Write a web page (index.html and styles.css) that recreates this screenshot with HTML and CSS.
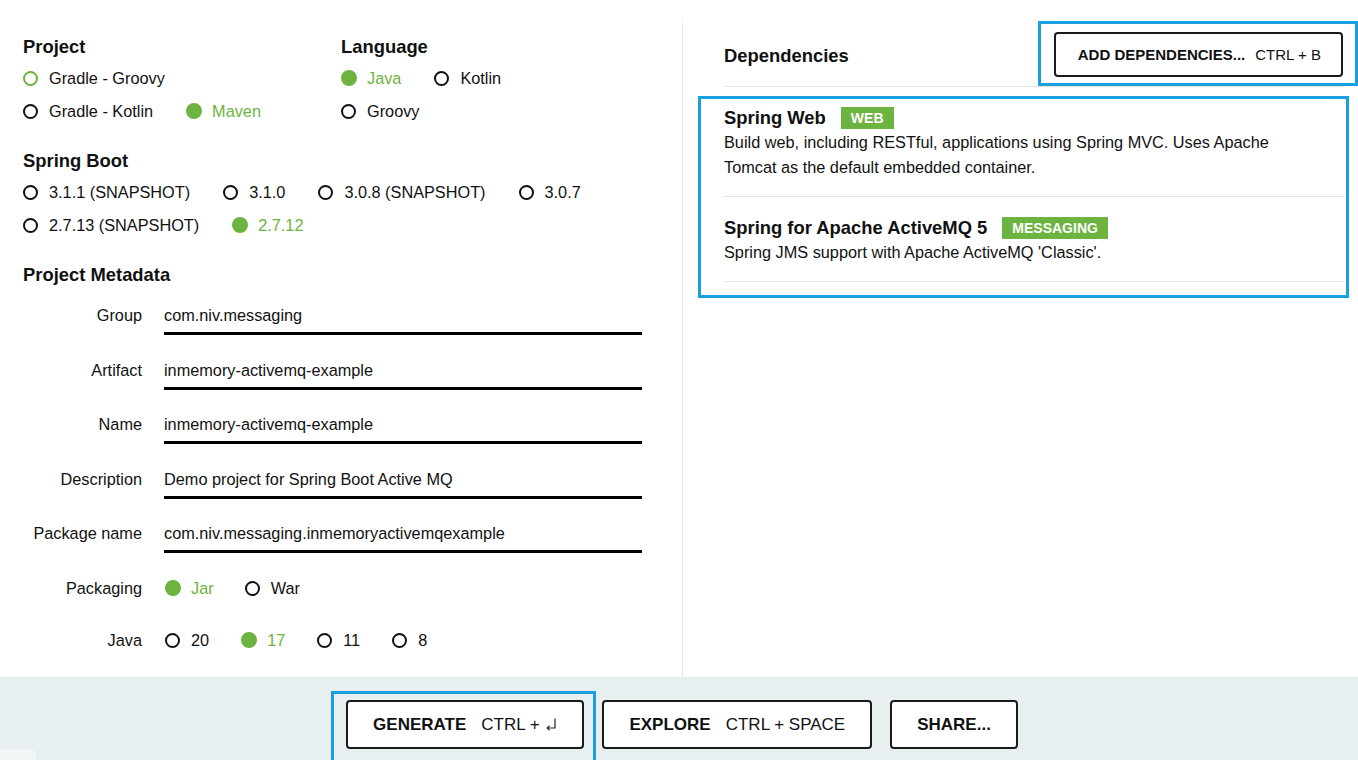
FILE: index.html
```html
<!DOCTYPE html>
<html lang="en">
<head>
<meta charset="utf-8">
<title>Spring Initializr</title>
<link rel="stylesheet" href="styles.css">
</head>
<body>
<div class="app">
  <main class="main">
    <section class="left">
      <div class="top-row">
        <div class="group project">
          <h2 class="heading">Project</h2>
          <div class="radio-row">
            <label class="radio focus"><span class="dot"></span>Gradle - Groovy</label>
          </div>
          <div class="radio-row">
            <label class="radio"><span class="dot"></span>Gradle - Kotlin</label>
            <label class="radio checked"><span class="dot"></span>Maven</label>
          </div>
        </div>
        <div class="group language">
          <h2 class="heading">Language</h2>
          <div class="radio-row">
            <label class="radio checked"><span class="dot"></span>Java</label>
            <label class="radio"><span class="dot"></span>Kotlin</label>
          </div>
          <div class="radio-row">
            <label class="radio"><span class="dot"></span>Groovy</label>
          </div>
        </div>
      </div>

      <div class="group section">
        <h2 class="heading">Spring Boot</h2>
        <div class="radio-row">
          <label class="radio"><span class="dot"></span>3.1.1 (SNAPSHOT)</label>
          <label class="radio"><span class="dot"></span>3.1.0</label>
          <label class="radio"><span class="dot"></span>3.0.8 (SNAPSHOT)</label>
          <label class="radio"><span class="dot"></span>3.0.7</label>
        </div>
        <div class="radio-row">
          <label class="radio"><span class="dot"></span>2.7.13 (SNAPSHOT)</label>
          <label class="radio checked"><span class="dot"></span>2.7.12</label>
        </div>
      </div>

      <div class="group section meta">
        <h2 class="heading">Project Metadata</h2>
        <div class="fields">
          <div class="field"><span class="label">Group</span><span class="input">com.niv.messaging</span></div>
          <div class="field"><span class="label">Artifact</span><span class="input">inmemory-activemq-example</span></div>
          <div class="field"><span class="label">Name</span><span class="input">inmemory-activemq-example</span></div>
          <div class="field"><span class="label">Description</span><span class="input">Demo project for Spring Boot Active MQ</span></div>
          <div class="field"><span class="label">Package name</span><span class="input">com.niv.messaging.inmemoryactivemqexample</span></div>
          <div class="field radio-field">
            <span class="label">Packaging</span>
            <div class="radio-row inline">
              <label class="radio checked"><span class="dot"></span>Jar</label>
              <label class="radio"><span class="dot"></span>War</label>
            </div>
          </div>
          <div class="field radio-field">
            <span class="label">Java</span>
            <div class="radio-row inline java">
              <label class="radio"><span class="dot"></span>20</label>
              <label class="radio checked"><span class="dot"></span>17</label>
              <label class="radio"><span class="dot"></span>11</label>
              <label class="radio"><span class="dot"></span>8</label>
            </div>
          </div>
        </div>
      </div>
    </section>

    <section class="right">
      <div class="deps-head">
        <h2 class="heading">Dependencies</h2>
        <div class="hl add-wrap">
          <button class="btn add-btn"><b>ADD DEPENDENCIES...</b><span class="key">CTRL + B</span></button>
          <div class="hl-box add-box"></div>
        </div>
      </div>
      <div class="deps-list">
        <div class="dep">
          <div class="dep-title">Spring Web <span class="badge">WEB</span></div>
          <p class="dep-desc">Build web, including RESTful, applications using Spring MVC. Uses Apache Tomcat as the default embedded container.</p>
        </div>
        <div class="dep">
          <div class="dep-title">Spring for Apache ActiveMQ 5 <span class="badge">MESSAGING</span></div>
          <p class="dep-desc">Spring JMS support with Apache ActiveMQ 'Classic'.</p>
        </div>
        <div class="hl-box list-box"></div>
      </div>
    </section>
  </main>

  <footer class="footer">
    <div class="hl gen-wrap">
      <button class="btn foot-btn"><b>GENERATE</b><span class="key">CTRL + <svg class="ret" width="12" height="16" viewBox="0 0 12 16"><path d="M10 1.5 V11 H2.2" fill="none" stroke="#222" stroke-width="1.2"/><path d="M4.6 8.6 L2.2 11 L4.6 13.4" fill="none" stroke="#222" stroke-width="1.2"/></svg></span></button>
      <div class="hl-box gen-box"></div>
    </div>
    <button class="btn foot-btn"><b>EXPLORE</b><span class="key">CTRL + SPACE</span></button>
    <button class="btn foot-btn"><b>SHARE...</b></button>
    <div class="corner"></div>
  </footer>
</div>
</body>
</html>
```

FILE: styles.css
```css
* { box-sizing: border-box; }

html, body {
  margin: 0;
  padding: 0;
  background: #ffffff;
}

body {
  font-family: "Liberation Sans", Arial, sans-serif;
  font-size: 16.3px;
  color: #111;
  overflow: hidden;
}

.app {
  width: 1358px;
  height: 760px;
  display: flex;
  flex-direction: column;
}

.main {
  height: 677px;
  padding-top: 22px;
  display: flex;
}

.left {
  width: 683px;
  height: 655px;
  border-right: 1px solid #e4e8e9;
  padding-left: 23px;
}

.right {
  flex: 1;
  padding: 0 13px 0 41px;
}

.heading {
  margin: 0 0 2px;
  font-size: 18.4px;
  line-height: 24px;
  font-weight: bold;
  color: #111;
}

.top-row {
  display: flex;
  padding-top: 13px;
}

.project { width: 318px; }

.section { margin-top: 22px; }

.radio-row {
  display: flex;
  align-items: center;
  gap: 33px;
  height: 33px;
  padding-top: 1px;
}

.radio {
  display: flex;
  align-items: center;
  white-space: nowrap;
  color: #111;
}

.dot {
  width: 15px;
  height: 15px;
  border: 2px solid #111;
  border-radius: 50%;
  margin-right: 11px;
  flex: none;
}

.radio.focus .dot { border-color: #6db33f; }

.radio.checked { color: #6db33f; }
.radio.checked .dot {
  background: #6db33f;
  border-color: #6db33f;
  width: 16px;
  height: 16px;
  margin-right: 10px;
}

.fields { padding-top: 9px; }

.field {
  display: flex;
  align-items: flex-start;
  height: 54.5px;
}

.label {
  width: 119px;
  margin-right: 22px;
  text-align: right;
  line-height: 34px;
  white-space: nowrap;
}

.input {
  width: 478px;
  height: 37px;
  line-height: 34px;
  border-bottom: 3px solid #000;
  white-space: nowrap;
}

.radio-field { height: 52px; }

.radio-row.inline {
  height: 34px;
  margin-left: 1px;
  gap: 31px;
}

.radio-row.java { gap: 32px; }

/* right side */
.deps-head {
  height: 65px;
  display: flex;
  align-items: center;
  justify-content: space-between;
  border-bottom: 1px solid #e3e6e8;
}

.deps-head .heading { margin: 3px 0 0; }

.hl { position: relative; }

.hl-box {
  position: absolute;
  border: 3px solid #1a9fe0;
  pointer-events: none;
}

.btn {
  font-family: "Liberation Sans", Arial, sans-serif;
  background: #fff;
  color: #111;
  border: 2px solid #1a1a1a;
  border-radius: 4px;
  display: flex;
  align-items: center;
  white-space: nowrap;
  cursor: pointer;
}

.btn b { font-weight: bold; }

.add-wrap { margin-right: 2px; }

.add-btn {
  height: 45px;
  padding: 0 20px 0 22px;
  font-size: 15px;
}

.add-btn .key { margin-left: 10px; }

.add-box {
  top: -11px;
  left: -16px;
  right: -15px;
  bottom: -9px;
}

.deps-list { position: relative; }

.dep {
  padding: 19px 0 16px;
  border-bottom: 1px solid #e3e6e8;
}

.dep-title {
  display: flex;
  align-items: center;
  gap: 15px;
  height: 24px;
  font-size: 18.4px;
  font-weight: bold;
}

.badge {
  background: #6db33f;
  color: #fff;
  font-size: 14px;
  font-weight: bold;
  height: 22px;
  line-height: 22px;
  padding: 0 10px;
}

.dep-desc {
  margin: 0;
  max-width: 580px;
  line-height: 25px;
}

.list-box {
  top: 9px;
  left: -26px;
  right: -4px;
  bottom: -16px;
}

/* footer */
.footer {
  position: relative;
  height: 83px;
  background: #e8eff0;
  display: flex;
  justify-content: center;
  align-items: flex-start;
  gap: 18px;
  padding: 23px 0 0 6px;
}

.foot-btn {
  height: 49px;
  padding: 0 25px;
  font-size: 17px;
}

.foot-btn .key {
  margin-left: 15px;
  display: flex;
  align-items: center;
  white-space: pre;
}

.ret { margin-left: 1px; }

.gen-box {
  top: -9px;
  left: -15px;
  right: -12px;
  bottom: -14px;
}

.corner {
  position: absolute;
  left: 0;
  bottom: 0;
  width: 36px;
  height: 11px;
  background: #f1f5f5;
  border-radius: 0 6px 0 0;
}
```
